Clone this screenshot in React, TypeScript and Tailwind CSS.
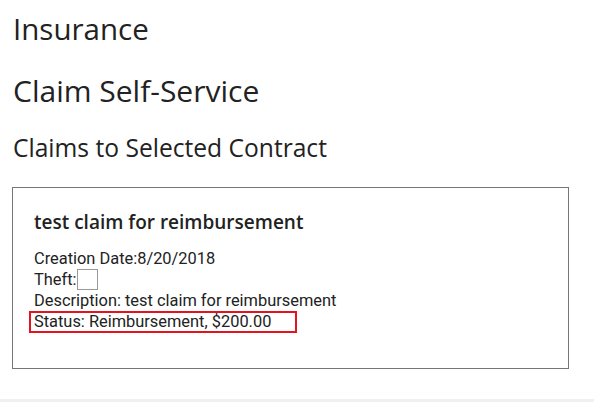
export default function App() {
  return (
    <div className="h-[402px] w-[594px] overflow-hidden bg-white flex flex-col text-[#222]">
      <div className="flex-1 px-[13px] pt-[11px]">
        <h1 className="text-[29.5px] leading-[36px] font-['Open_Sans',sans-serif]">Insurance</h1>
        <h2 className="mt-[26px] text-[30px] leading-[36px] font-['Open_Sans',sans-serif]">
          Claim Self-Service
        </h2>
        <h3 className="mt-[24px] text-[24.6px] leading-[30px] font-['Open_Sans',sans-serif]">
          Claims to Selected Contract
        </h3>
        <div className="mt-[24px] -ml-px h-[182px] w-[557px] border border-[#767676] px-[21px] pt-[20px]">
          <div className="text-[19px] leading-[28px] font-semibold font-['Open_Sans',sans-serif]">
            test claim for reimbursement
          </div>
          <div className="mt-[12px] text-[16.4px] leading-[21px] font-['Roboto',sans-serif]">
            <div>Creation Date:8/20/2018</div>
            <div className="flex items-end">
              Theft:
              <span className="inline-block h-[21px] w-[21px] border border-[#999] bg-white" />
            </div>
            <div>Description: test claim for reimbursement</div>
            <div className="-ml-[5px] w-[268px] border-2 border-[#e3141f] pl-[3px] leading-[18px]">
              Status: Reimbursement, $200.00
            </div>
          </div>
        </div>
      </div>
      <div className="h-[3px] bg-[#f0f0f0]" />
    </div>
  );
}
